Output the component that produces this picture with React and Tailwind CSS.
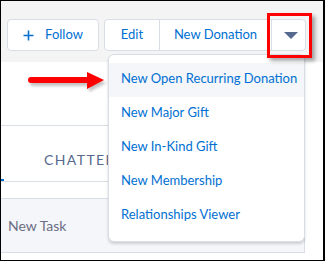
import { useState } from 'react'

const MENU_ITEMS = [
    'New Open Recurring Donation',
    'New Major Gift',
    'New In-Kind Gift',
    'New Membership',
    'Relationships Viewer',
]

/** Flecha roja de anotación con su sombra */
function RedArrow() {
    return (
        <svg width="90" height="30" viewBox="0 0 90 30" className="absolute left-[22px] top-[66px]">
            <defs>
                <filter id="blur" x="-20%" y="-50%" width="140%" height="200%">
                    <feGaussianBlur stdDeviation="1.5" />
                </filter>
            </defs>
            <g transform="translate(2,3)" fill="#9a9a9a" opacity="0.6" filter="url(#blur)">
                <rect x="5" y="10" width="62" height="6" rx="3" />
                <polygon points="64,5 81,13 64,22" />
            </g>
            <g fill="#f00">
                <rect x="5" y="10" width="62" height="6" rx="3" />
                <polygon points="64,5 81,13 64,22" />
            </g>
        </svg>
    )
}

function ActionMenu() {
    const [active] = useState(0)

    return (
        <div className="absolute left-[107px] top-[53px] w-[197px] rounded-md border border-[#d8dde6] bg-white py-[8px] shadow-[0_2px_3px_rgba(0,0,0,0.16)]">
            {MENU_ITEMS.map((label, i) => (
                <div
                    key={label}
                    className={`flex h-[34px] items-center whitespace-nowrap px-[12px] pb-[2px] text-[13px] text-[#0070d2] ${i === active ? 'bg-[#f4f6f9]' : ''}`}
                >
                    {label}
                </div>
            ))}
        </div>
    )
}

export default function App() {
    return (
        <div className="relative h-[261px] w-[325px] overflow-hidden border border-r-[2px] border-black bg-white font-['Lato',sans-serif]">
            {/* cabecera con botones */}
            <div className="flex h-[61px] items-start gap-[5px] bg-[#f4f4f5] pl-[6px] pt-[18px]">
                <button className="flex h-[32px] w-[92px] items-center justify-center gap-[11px] rounded-[4px] border border-[#d8dde6] bg-white text-[13px] text-[#0070d2]">
                    <svg width="11" height="11" viewBox="0 0 11 11">
                        <path d="M5.5 0.5v10M0.5 5.5h10" stroke="#0070d2" strokeWidth="1.6" />
                    </svg>
                    Follow
                </button>
                <div className="flex h-[32px] w-[202px] rounded-[4px] border border-[#d8dde6] bg-white text-[13px] text-[#0070d2]">
                    <div className="flex w-[55px] items-center justify-center border-r border-[#d8dde6]">Edit</div>
                    <div className="flex w-[112px] items-center justify-center border-r border-[#d8dde6]">New Donation</div>
                    <div className="flex flex-1 items-center justify-center">
                        <svg width="14" height="7" viewBox="0 0 14 7" className="ml-[4px]">
                            <polygon points="0,0 14,0 7,7" fill="#54698d" />
                        </svg>
                    </div>
                </div>
            </div>

            {/* cuerpo de la página */}
            <div className="flex">
                <div className="w-[304px] border-r border-[#d8dde6]">
                    <div className="h-[64px] border-b border-[#d8dde6]" />
                    <div className="relative flex h-[56px] items-center border-b border-[#d8dde6] pl-[43px] pt-[12px]">
                        <span className="text-[14px] tracking-[1.4px] text-[#54698d]">CHATTER</span>
                        <div className="absolute bottom-0 left-0 h-[2px] w-[3px] bg-[#0070d2]" />
                    </div>
                    <div className="h-[16px]" />
                    <div className="flex h-[55px] items-center border-y border-[#d8dde6] bg-[#f4f6f9] pl-[7px]">
                        <span className="text-[14px] text-[#6b6d85]">New Task</span>
                    </div>
                </div>
            </div>

            <ActionMenu />

            {/* anotaciones */}
            <div className="absolute left-[266px] top-[12px] h-[45px] w-[45px] border-[3px] border-[#ff0000] shadow-[3px_3px_4px_rgba(0,0,0,0.35)]" />
            <RedArrow />
        </div>
    )
}
